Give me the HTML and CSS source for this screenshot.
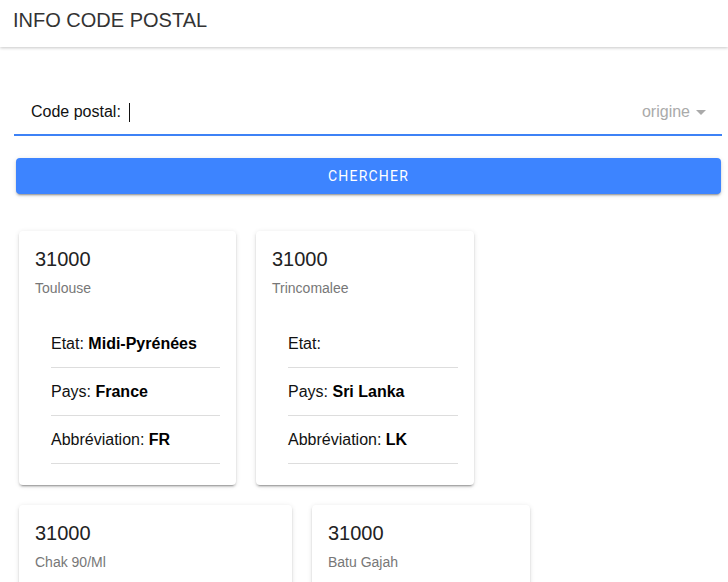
FILE: index.html
```html
<!DOCTYPE html>
<html lang="fr">
<head>
<meta charset="utf-8">
<title>Info code postal</title>
<link rel="stylesheet" href="styles.css">
</head>
<body>
<header class="toolbar">
  <h1 class="toolbar-title">INFO CODE POSTAL</h1>
</header>
<main class="content">
  <div class="field">
    <label class="field-label">Code postal:</label>
    <span class="caret-line"></span>
    <span class="field-select">origine <span class="triangle"></span></span>
  </div>
  <button class="btn">CHERCHER</button>
  <section class="cards">
    <article class="card card-first">
      <div class="card-title">31000</div>
      <div class="card-sub">Toulouse</div>
      <ul class="list">
        <li>Etat: <b>Midi-Pyrénées</b></li>
        <li>Pays: <b>France</b></li>
        <li>Abbréviation: <b>FR</b></li>
      </ul>
    </article>
    <article class="card">
      <div class="card-title">31000</div>
      <div class="card-sub">Trincomalee</div>
      <ul class="list">
        <li>Etat: <b></b></li>
        <li>Pays: <b>Sri Lanka</b></li>
        <li>Abbréviation: <b>LK</b></li>
      </ul>
    </article>
    <article class="card card-wide">
      <div class="card-title">31000</div>
      <div class="card-sub">Chak 90/Ml</div>
      <ul class="list">
        <li>Etat: <b>Punjab</b></li>
        <li>Pays: <b>Pakistan</b></li>
        <li>Abbréviation: <b>PK</b></li>
      </ul>
    </article>
    <article class="card">
      <div class="card-title">31000</div>
      <div class="card-sub">Batu Gajah</div>
      <ul class="list">
        <li>Etat: <b>Perak</b></li>
        <li>Pays: <b>Malaysia</b></li>
        <li>Abbréviation: <b>MY</b></li>
      </ul>
    </article>
  </section>
</main>
</body>
</html>
```

FILE: styles.css
```css
* { box-sizing: border-box; }
html, body {
  margin: 0;
  padding: 0;
  background: #fff;
  font-family: "Liberation Sans", Arial, sans-serif;
  color: #000;
}
.toolbar {
  height: 47px;
  background: #fff;
  box-shadow: 0 1px 3px rgba(0,0,0,.22);
  padding: 0 13px;
  display: flex;
  align-items: flex-start;
}
.toolbar-title {
  margin: 0;
  padding-top: 9px;
  font-size: 20px;
  font-weight: 400;
  line-height: 23px;
  color: #333;
}
.content {
  padding: 0 6px 0 14px;
}
.field {
  margin-top: 40px;
  height: 49px;
  border-bottom: 2px solid #3d82f6;
  display: flex;
  align-items: center;
  padding: 3px 17px 0;
}
.field-label {
  font-size: 16px;
  color: #111;
}
.caret-line {
  width: 1px;
  height: 19px;
  background: #111;
  margin-left: 8px;
}
.field-select {
  margin-left: auto;
  margin-right: -1px;
  font-size: 16px;
  color: #aaa;
  display: flex;
  align-items: center;
}
.triangle {
  width: 0;
  height: 0;
  border-left: 5px solid transparent;
  border-right: 5px solid transparent;
  border-top: 5px solid #aaa;
  margin-left: 6px;
}
.btn {
  display: block;
  width: 705px;
  margin: 22px 0 0 2px;
  height: 36px;
  border: 0;
  border-radius: 4px;
  background: #3d84ff;
  color: #fff;
  font-family: Roboto, "Liberation Sans", sans-serif;
  font-size: 14px;
  letter-spacing: 1.2px;
  box-shadow: 0 3px 1px -2px rgba(0,0,0,.2), 0 2px 2px 0 rgba(0,0,0,.14), 0 1px 5px 0 rgba(0,0,0,.12);
}
.cards {
  display: flex;
  flex-wrap: wrap;
  gap: 20px;
  margin-top: 37px;
  padding-left: 5px;
}
.card {
  width: 218px;
  background: #fff;
  border-radius: 4px;
  padding: 16px 16px 21px;
  box-shadow: 0 3px 1px -2px rgba(0,0,0,.2), 0 2px 2px 0 rgba(0,0,0,.14), 0 1px 5px 0 rgba(0,0,0,.12);
}
.card-first { width: 217px; }
.card-wide { width: 273px; }
.card-title {
  font-size: 20px;
  line-height: 24px;
  color: #222;
}
.card-sub {
  margin-top: 7px;
  font-size: 14px;
  line-height: 20px;
  color: #777;
}
.list {
  list-style: none;
  margin: 22px 0 0 16px;
  padding: 0;
}
.list li {
  height: 48px;
  border-bottom: 1px solid #ddd;
  display: flex;
  align-items: center;
  white-space: pre;
  font-size: 16px;
  color: #111;
}
.list li b { color: #000; }
```
